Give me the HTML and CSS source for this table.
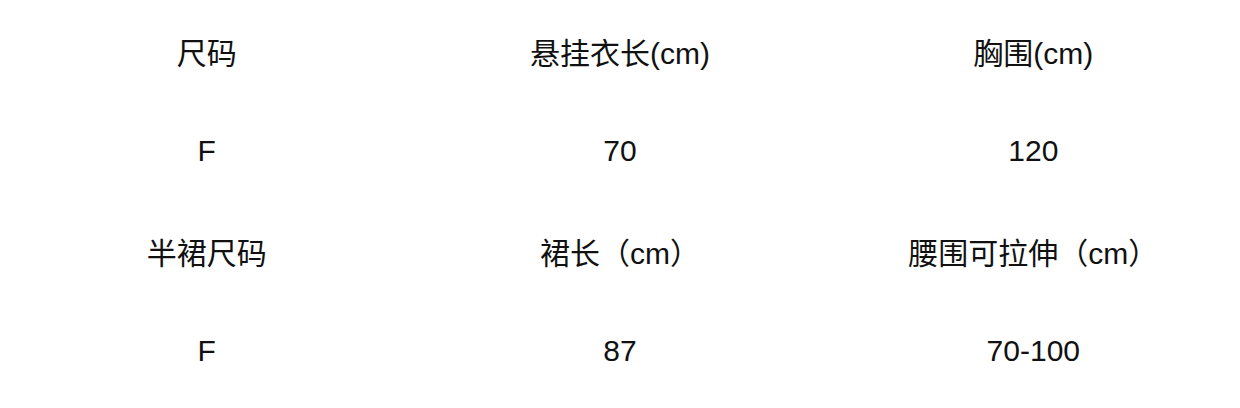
FILE: index.html
```html
<!DOCTYPE html>
<html lang="zh">
<head>
<meta charset="utf-8">
<link rel="stylesheet" href="styles.css">
</head>
<body>
<div class="table">
  <div class="cell">尺码</div>
  <div class="cell">悬挂衣长(cm)</div>
  <div class="cell">胸围(cm)</div>
  <div class="cell">F</div>
  <div class="cell">70</div>
  <div class="cell">120</div>
  <div class="cell">半裙尺码</div>
  <div class="cell">裙长（cm）</div>
  <div class="cell">腰围可拉伸（cm）</div>
  <div class="cell">F</div>
  <div class="cell">87</div>
  <div class="cell">70-100</div>
</div>
</body>
</html>
```
FILE: styles.css
```css
html, body {
  margin: 0;
  padding: 0;
  background: #ffffff;
}
.table {
  width: 1240px;
  height: 408px;
  box-sizing: border-box;
  padding-top: 1px;
  display: grid;
  grid-template-columns: repeat(3, 1fr);
  grid-auto-rows: 100px;
  font-family: "Liberation Sans", "Noto Sans CJK SC", sans-serif;
  font-size: 30px;
  color: #111111;
}
.cell {
  display: flex;
  align-items: center;
  justify-content: center;
}
```
